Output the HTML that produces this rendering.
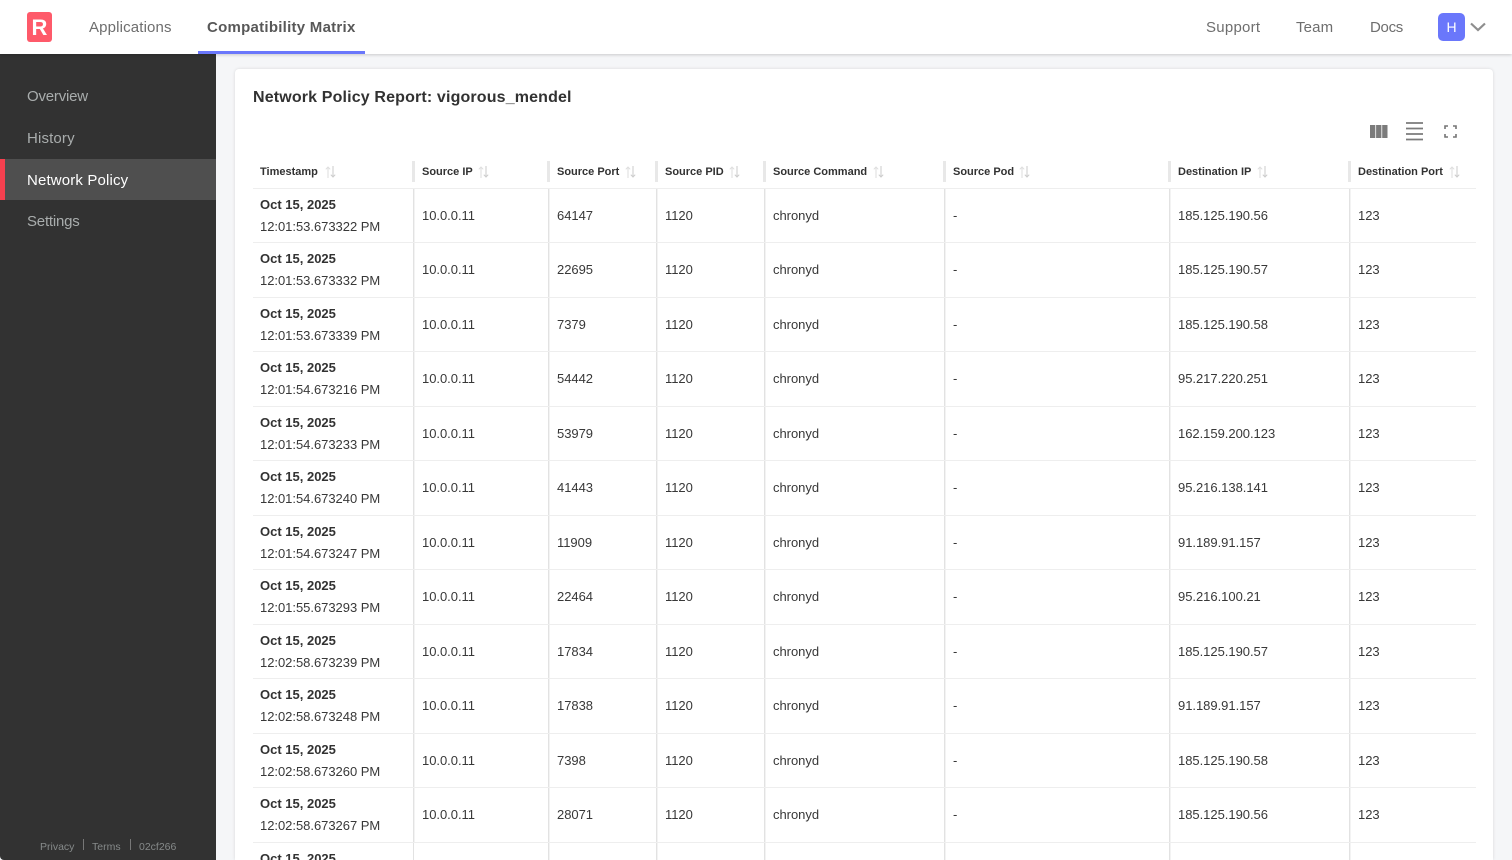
<!DOCTYPE html>
<html><head><meta charset="utf-8"><title>Network Policy</title>
<style>
*{box-sizing:border-box}
html,body{margin:0;padding:0;width:1512px;height:860px;overflow:hidden;background:#f5f6f8;font-family:"Liberation Sans",sans-serif}
#wrap{position:relative;width:1512px;height:860px;overflow:hidden;background:#f5f6f8}
.abs{position:absolute;white-space:nowrap}
#top{position:absolute;left:0;top:0;width:1512px;height:54px;background:#fff;box-shadow:0 1px 3px rgba(0,0,0,.18);z-index:5}
.nav{position:absolute;top:18px;font-size:15px;line-height:20px;color:#6e6e6e;white-space:nowrap;letter-spacing:.15px}
#logo{position:absolute;left:27px;top:12px;width:25px;height:29.500px;border-radius:3px;background:#fe5a6a;color:#fff;font-weight:700;font-size:22px;line-height:31px;text-align:center}
#under{position:absolute;left:198px;top:51px;width:167px;height:3px;background:#6a77fb}
#av{position:absolute;left:1438px;top:13px;width:27px;height:28px;border-radius:5px;background:#6a77fb;color:#fff;font-size:14px;line-height:28px;text-align:center}
#side{position:absolute;left:0;top:54px;width:216px;height:806px;background:#323232;border-bottom-left-radius:4px}
.si{position:absolute;left:0;width:216px;height:41.500px;padding-left:27px;font-size:15px;line-height:44px;color:#a9adad}
.si.on{background:#4f4f4f;color:#fff;border-left:5px solid #f5404f;padding-left:22px;line-height:43px}
.ft{position:absolute;top:786px;font-size:10.500px;line-height:14px;color:#868a8a;white-space:nowrap}
.fs{position:absolute;top:785px;width:1px;height:11px;background:#777}
#card{position:absolute;left:235px;top:69px;width:1258px;height:791px;overflow:hidden;background:#fff;border-radius:4px 4px 0 0;box-shadow:0 0 3px rgba(0,0,0,.12)}
h1{position:absolute;left:18px;top:18px;margin:0;font-size:16px;letter-spacing:.15px;line-height:21px;font-weight:700;color:#323232;white-space:nowrap}
#tb{position:absolute;left:18px;top:88px;width:1223px;height:703px;overflow:hidden}
.r,.h{display:grid;grid-template-columns:161px 135px 108px 108px 180px 225px 180px 126px;border-bottom:1px solid #eee}
.h{height:31.750px}
.r{height:54.500px}
.h>div{position:relative;padding-left:8px;font-size:11px;font-weight:700;color:#323232;line-height:30px;white-space:nowrap}
.h>div:first-child{padding-left:7px}
.h>div:not(:last-child)::after{content:"";position:absolute;right:-1px;top:4px;width:3px;height:21px;background:#e8e8e8}
.h svg{position:absolute;top:9px}
.r>div{position:relative;padding-left:8px;font-size:13px;line-height:53px;color:#383838;white-space:nowrap;letter-spacing:-.03px}
.r>div:not(:last-child)::after{content:"";position:absolute;right:-1px;top:0;width:2px;height:100%;background:linear-gradient(90deg,#e2e2e2 50%,#f3f3f3 50%)}
.r>div:first-child{padding-left:7px;line-height:22px;padding-top:5px}
.r.last{height:18px;border-bottom:0}
b{font-weight:700;letter-spacing:0;display:block;color:#323232}
</style></head><body>
<div id="wrap">
<div id="top">
<div id="logo">R</div>
<div class="nav" style="left:89px">Applications</div>
<div class="nav" style="left:207px;font-weight:700;color:#585858;letter-spacing:.26px">Compatibility Matrix</div>
<div id="under"></div>
<div class="nav" style="left:1206px;letter-spacing:.25px">Support</div>
<div class="nav" style="left:1296px">Team</div>
<div class="nav" style="left:1370px;letter-spacing:-.3px">Docs</div>
<div id="av">H</div>
<svg class="abs" style="left:1470px;top:22px" width="16" height="10" viewBox="0 0 16 10"><path d="M1 1.500l7 6.500 7-6.500" fill="none" stroke="#8e8e8e" stroke-width="2.200"/></svg>
</div>
<div id="side">
<div class="si" style="top:21px;letter-spacing:-.2px">Overview</div>
<div class="si" style="top:63px;letter-spacing:.15px">History</div>
<div class="si on" style="top:104.500px;letter-spacing:.15px">Network Policy</div>
<div class="si" style="top:146px;letter-spacing:-.2px">Settings</div>
<div class="ft" style="left:40px">Privacy</div><div class="fs" style="left:83px"></div>
<div class="ft" style="left:92px">Terms</div><div class="fs" style="left:130px"></div>
<div class="ft" style="left:139px">02cf266</div>
</div>
<div id="card">
<h1>Network Policy Report: vigorous_mendel</h1>
<svg class="abs" style="left:1135px;top:56px" width="18" height="13" viewBox="0 0 18 13"><path d="M0 0h5.300v13H0zM6.100 0h5.300v13H6.100zM12.200 0h5.300v13h-5.300z" fill="#7b7b7b"/></svg>
<svg class="abs" style="left:1171px;top:53px" width="17" height="19" viewBox="0 0 17 19"><path d="M0 1h17M0 6.500h17M0 12h17M0 17.500h17" stroke="#7b7b7b" stroke-width="1.700" fill="none"/></svg>
<svg class="abs" style="left:1209px;top:56px" width="13" height="13" viewBox="0 0 13 13"><path d="M1 4V1h3M9 1h3v3M12 9v3H9M4 12H1V9" stroke="#757575" stroke-width="1.600" fill="none"/></svg>
<div id="tb">
<div class="h">
<div>Timestamp<svg style="left:72px" width="11" height="12" viewBox="0 0 11 12"><path d="M3 12V1M.8 3.300L3 1l2.200 2.300" stroke="#dedede" fill="none"/><path d="M8 0v11M5.800 8.700L8 11l2.200-2.300" stroke="#cbcbcb" fill="none"/></svg></div>
<div>Source IP<svg style="left:64px" width="11" height="12" viewBox="0 0 11 12"><path d="M3 12V1M.8 3.300L3 1l2.200 2.300" stroke="#dedede" fill="none"/><path d="M8 0v11M5.800 8.700L8 11l2.200-2.300" stroke="#cbcbcb" fill="none"/></svg></div>
<div>Source Port<svg style="left:76px" width="11" height="12" viewBox="0 0 11 12"><path d="M3 12V1M.8 3.300L3 1l2.200 2.300" stroke="#dedede" fill="none"/><path d="M8 0v11M5.800 8.700L8 11l2.200-2.300" stroke="#cbcbcb" fill="none"/></svg></div>
<div>Source PID<svg style="left:72px" width="11" height="12" viewBox="0 0 11 12"><path d="M3 12V1M.8 3.300L3 1l2.200 2.300" stroke="#dedede" fill="none"/><path d="M8 0v11M5.800 8.700L8 11l2.200-2.300" stroke="#cbcbcb" fill="none"/></svg></div>
<div>Source Command<svg style="left:108px" width="11" height="12" viewBox="0 0 11 12"><path d="M3 12V1M.8 3.300L3 1l2.200 2.300" stroke="#dedede" fill="none"/><path d="M8 0v11M5.800 8.700L8 11l2.200-2.300" stroke="#cbcbcb" fill="none"/></svg></div>
<div>Source Pod<svg style="left:74px" width="11" height="12" viewBox="0 0 11 12"><path d="M3 12V1M.8 3.300L3 1l2.200 2.300" stroke="#dedede" fill="none"/><path d="M8 0v11M5.800 8.700L8 11l2.200-2.300" stroke="#cbcbcb" fill="none"/></svg></div>
<div>Destination IP<svg style="left:87px" width="11" height="12" viewBox="0 0 11 12"><path d="M3 12V1M.8 3.300L3 1l2.200 2.300" stroke="#dedede" fill="none"/><path d="M8 0v11M5.800 8.700L8 11l2.200-2.300" stroke="#cbcbcb" fill="none"/></svg></div>
<div>Destination Port<svg style="left:99px" width="11" height="12" viewBox="0 0 11 12"><path d="M3 12V1M.8 3.300L3 1l2.200 2.300" stroke="#dedede" fill="none"/><path d="M8 0v11M5.800 8.700L8 11l2.200-2.300" stroke="#cbcbcb" fill="none"/></svg></div>
</div>
<div class="r"><div><b>Oct 15, 2025</b>12:01:53.673322 PM</div><div>10.0.0.11</div><div>64147</div><div>1120</div><div>chronyd</div><div>-</div><div>185.125.190.56</div><div>123</div></div>
<div class="r"><div><b>Oct 15, 2025</b>12:01:53.673332 PM</div><div>10.0.0.11</div><div>22695</div><div>1120</div><div>chronyd</div><div>-</div><div>185.125.190.57</div><div>123</div></div>
<div class="r"><div><b>Oct 15, 2025</b>12:01:53.673339 PM</div><div>10.0.0.11</div><div>7379</div><div>1120</div><div>chronyd</div><div>-</div><div>185.125.190.58</div><div>123</div></div>
<div class="r"><div><b>Oct 15, 2025</b>12:01:54.673216 PM</div><div>10.0.0.11</div><div>54442</div><div>1120</div><div>chronyd</div><div>-</div><div>95.217.220.251</div><div>123</div></div>
<div class="r"><div><b>Oct 15, 2025</b>12:01:54.673233 PM</div><div>10.0.0.11</div><div>53979</div><div>1120</div><div>chronyd</div><div>-</div><div>162.159.200.123</div><div>123</div></div>
<div class="r"><div><b>Oct 15, 2025</b>12:01:54.673240 PM</div><div>10.0.0.11</div><div>41443</div><div>1120</div><div>chronyd</div><div>-</div><div>95.216.138.141</div><div>123</div></div>
<div class="r"><div><b>Oct 15, 2025</b>12:01:54.673247 PM</div><div>10.0.0.11</div><div>11909</div><div>1120</div><div>chronyd</div><div>-</div><div>91.189.91.157</div><div>123</div></div>
<div class="r"><div><b>Oct 15, 2025</b>12:01:55.673293 PM</div><div>10.0.0.11</div><div>22464</div><div>1120</div><div>chronyd</div><div>-</div><div>95.216.100.21</div><div>123</div></div>
<div class="r"><div><b>Oct 15, 2025</b>12:02:58.673239 PM</div><div>10.0.0.11</div><div>17834</div><div>1120</div><div>chronyd</div><div>-</div><div>185.125.190.57</div><div>123</div></div>
<div class="r"><div><b>Oct 15, 2025</b>12:02:58.673248 PM</div><div>10.0.0.11</div><div>17838</div><div>1120</div><div>chronyd</div><div>-</div><div>91.189.91.157</div><div>123</div></div>
<div class="r"><div><b>Oct 15, 2025</b>12:02:58.673260 PM</div><div>10.0.0.11</div><div>7398</div><div>1120</div><div>chronyd</div><div>-</div><div>185.125.190.58</div><div>123</div></div>
<div class="r"><div><b>Oct 15, 2025</b>12:02:58.673267 PM</div><div>10.0.0.11</div><div>28071</div><div>1120</div><div>chronyd</div><div>-</div><div>185.125.190.56</div><div>123</div></div>
<div class="r last"><div style="overflow:hidden"><b>Oct 15, 2025</b></div><div></div><div></div><div></div><div></div><div></div><div></div><div></div></div>
</div>
</div>
</div>
</body></html>
